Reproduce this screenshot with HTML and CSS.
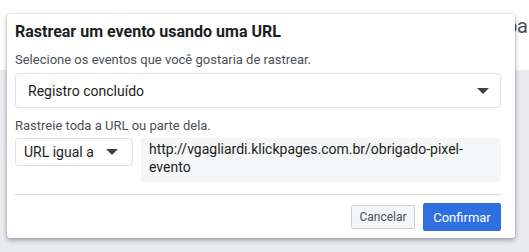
FILE: index.html
```html
<!DOCTYPE html>
<html lang="pt-BR">
<head>
<meta charset="utf-8">
<title>Rastrear um evento usando uma URL</title>
<link rel="stylesheet" href="styles.css">
</head>
<body>
<div class="page">
  <div class="page-top">
    <span class="bg-heading">pa</span>
  </div>
  <div class="page-rest"></div>

  <div class="dialog" role="dialog">
    <h1 class="title">Rastrear um evento usando uma URL</h1>
    <p class="label first">Selecione os eventos que você gostaria de rastrear.</p>
    <div class="select big">
      <span class="select-text">Registro concluído</span>
      <span class="caret"></span>
    </div>
    <p class="label second">Rastreie toda a URL ou parte dela.</p>
    <div class="row">
      <div class="select small">
        <span class="select-text">URL igual a</span>
        <span class="caret"></span>
      </div>
      <div class="url-field">http://vgagliardi.klickpages.com.br/obrigado-pixel-evento</div>
    </div>
    <div class="footer">
      <button class="btn cancel" type="button">Cancelar</button>
      <button class="btn confirm" type="button">Confirmar</button>
    </div>
  </div>
</div>
</body>
</html>
```

FILE: styles.css
```css
* { box-sizing: border-box; }

html, body {
  margin: 0;
  padding: 0;
}

body {
  font-family: Roboto, "Liberation Sans", Arial, sans-serif;
  color: #1c1e21;
  width: 529px;
  height: 252px;
  overflow: hidden;
}

.page {
  position: relative;
  width: 529px;
  height: 252px;
  display: flex;
  flex-direction: column;
}

.page-top {
  height: 70px;
  background: #ffffff;
  position: relative;
  flex: none;
}

.page-rest {
  flex: 1;
  background: #e9ebee;
}

.bg-heading {
  position: absolute;
  right: 1px;
  top: 14px;
  font-size: 20px;
  line-height: 24px;
  color: #4b4f56;
  white-space: nowrap;
}

.dialog {
  position: absolute;
  left: 7px;
  top: 14px;
  width: 508px;
  height: 224px;
  background: #ffffff;
  border-radius: 3px;
  box-shadow: 0 2px 5px rgba(0, 0, 0, 0.35), 0 0 2px rgba(0, 0, 0, 0.12);
  padding: 8px 14px 7px 8px;
  display: flex;
  flex-direction: column;
}

.title {
  margin: 0;
  font-size: 16px;
  line-height: 20px;
  font-weight: 700;
  color: #1c1e21;
}

.label {
  margin: 0;
  font-size: 13px;
  line-height: 16px;
  color: #4b4f56;
}

.label.first { margin-top: 10px; }
.label.second { margin-top: 10px; }

.select {
  display: flex;
  align-items: center;
  justify-content: space-between;
  background: #ffffff;
  border: 1px solid #dddfe2;
  border-radius: 4px;
  color: #1c1e21;
}

.select.big {
  margin-top: 5px;
  height: 35px;
  padding: 0 11px 0 12px;
  font-size: 14px;
}

.select.small {
  flex: none;
  width: 118px;
  height: 28px;
  padding: 0 14px 0 8px;
  font-size: 14px;
}

.caret {
  width: 0;
  height: 0;
  border-left: 6px solid transparent;
  border-right: 6px solid transparent;
  border-top: 6px solid #1c1e21;
  opacity: 0.85;
}

.row {
  margin-top: 4px;
  display: flex;
  align-items: flex-start;
  gap: 8px;
}

.url-field {
  flex: 1;
  height: 44px;
  background: #f5f6f7;
  padding: 2px 30px 0 8px;
  font-size: 14px;
  line-height: 18px;
  color: #1c1e21;
}

.footer {
  margin-top: 12px;
  border-top: 1px solid #dadde1;
  padding-top: 8px;
  display: flex;
  justify-content: flex-end;
  align-items: center;
  gap: 8px;
}

.btn {
  font-family: inherit;
  border-radius: 2px;
  cursor: pointer;
}

.cancel {
  height: 24px;
  width: 64px;
  padding: 0;
  font-size: 12px;
  background: #f5f6f7;
  border: 1px solid #ccd0d5;
  color: #4b4f56;
}

.confirm {
  height: 28px;
  width: 78px;
  padding: 0;
  font-size: 13px;
  background: #2f6fe0;
  border: 1px solid #2f6fe0;
  color: #ffffff;
}
```
